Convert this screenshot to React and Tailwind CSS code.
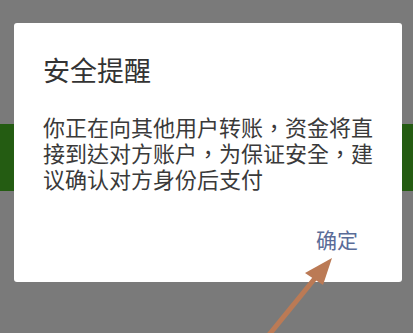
import React from "react";

function App() {
  return (
    <div
      className="relative w-[413px] h-[333px] overflow-hidden bg-[#7a7a7a]"
      style={{ fontFamily: '"Noto Sans CJK SC", "Noto Sans", sans-serif' }}
    >
      {/* page behind the dimmed overlay */}
      <div className="flex flex-col">
        <div className="h-[124px]" />
        <div className="h-[67px] bg-[#245c12]" />
      </div>

      {/* dialog */}
      <div className="absolute left-[14px] top-[23px] w-[388px] h-[259px] bg-white rounded-[3px] pt-[31px] px-[29px]">
        <h2 className="text-[27px] leading-[32px] text-[#333333] font-normal">安全提醒</h2>
        {/* TC face keeps the full-width commas centred, as on the device */}
        <p
          className="mt-[27px] w-[332px] text-[22px] leading-[26px] text-[#3a3a3a]"
          style={{ fontFamily: '"Noto Sans CJK TC", "Noto Sans CJK SC", sans-serif' }}
        >
          你正在向其他用户转账，资金将直接到达对方账户，为保证安全，建议确认对方身份后支付
        </p>
        <div className="mt-[34px] flex justify-end pr-[15px]">
          <button className="text-[21px] leading-[28px] text-[#5a6c98]">确定</button>
        </div>
      </div>

      {/* pointing arrow */}
      <svg className="absolute left-0 top-0" width="413" height="333" viewBox="0 0 413 333">
        <line x1="268" y1="336" x2="316" y2="277" stroke="#bb7a55" strokeWidth="5" />
        <polygon points="332,258 305,273 323,285" fill="#bb7a55" />
      </svg>
    </div>
  );
}

export default App;
